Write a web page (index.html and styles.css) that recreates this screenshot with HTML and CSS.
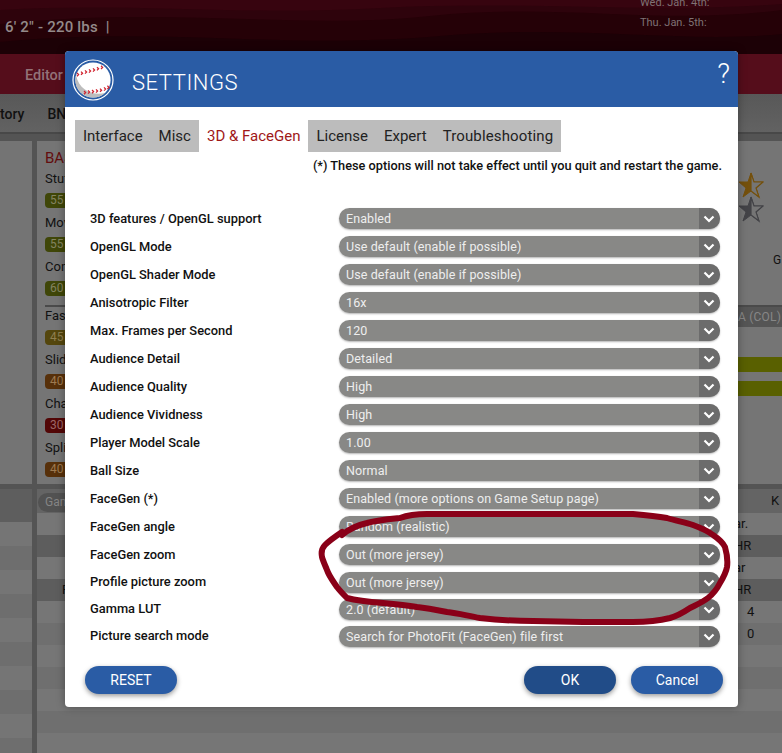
FILE: index.html
```html
<!DOCTYPE html>
<html lang="en">
<head>
<meta charset="utf-8">
<title>Settings</title>
<link rel="stylesheet" href="styles.css">
</head>
<body>
<div class="page">
  <header class="topbar">
    <svg class="waves" width="782" height="54" viewBox="0 0 782 54" aria-hidden="true">
      <path d="M0 0H782V10C660 26 560 2 430 16C300 30 170 6 0 24Z" fill="#2e030c"/>
      <path d="M0 0H782V4C640 14 520 0 380 8C240 16 130 2 0 10Z" fill="#37040f"/>
      <path d="M0 42C160 26 280 50 440 36C580 24 680 44 782 34V54H0Z" fill="#1c0106"/>
    </svg>
    <div class="bio">6' 2" - 220 lbs &nbsp;|</div>
    <div class="dates">
      <div>Wed. Jan. 4th:</div>
      <div>Thu. Jan. 5th:</div>
    </div>
  </header>
  <nav class="mainnav"><span>Editor</span></nav>
  <nav class="subnav"><span>tory</span><span>BNN</span></nav>
  <main class="content">
    <section class="upper">
      <div class="col-left"></div>
      <div class="col-right">
        <h2 class="ratings-title">BASE</h2>
        <div class="rating"><span>Stuff</span><b class="pill olive">55</b></div>
        <div class="rating"><span>Move</span><b class="pill olive">55</b></div>
        <div class="rating"><span>Con</span><b class="pill olive">60</b></div>
        <div class="rating sep"><span>Fast</span><b class="pill mustard">45</b></div>
        <div class="rating"><span>Slid</span><b class="pill brown">40</b></div>
        <div class="rating"><span>Chan</span><b class="pill red">30</b></div>
        <div class="rating"><span>Spli</span><b class="pill brown">40</b></div>
        <div class="side">
          <div class="stars">
            <svg width="26" height="52" viewBox="0 0 26 52" aria-hidden="true">
              <path d="M13 2L16 11H25L18 17L21 26L13 20L5 26L8 17L1 11H10Z" fill="#74500c" stroke="#74500c"/>
              <path d="M13 2L16 11H25L18 17L21 26L13 20Z" fill="#757575" stroke="#74500c" stroke-width="1.2"/>
              <path d="M13 26L16 35H25L18 41L21 50L13 44L5 50L8 41L1 35H10Z" fill="#434347" stroke="#434347"/>
              <path d="M13 26L16 35H25L18 41L21 50L13 44Z" fill="#757575" stroke="#434347" stroke-width="1.2"/>
            </svg>
          </div>
          <div class="g">G</div>
          <div class="col-bar">A (COL)</div>
          <div class="lime"></div>
          <div class="lime"></div>
        </div>
      </div>
    </section>
    <section class="lower">
      <div class="lower-left">
        <div class="t h"></div><div class="t"></div><div class="t a"></div><div class="t"></div><div class="t a"></div><div class="t"></div><div class="t a"></div><div class="t"></div><div class="t a"></div><div class="t"></div><div class="t a"></div>
      </div>
      <div class="lower-right">
        <div class="r top"><span class="game-pill">Game</span><span class="val">K</span></div>
        <div class="r"><span class="val">ar.</span></div>
        <div class="r dark"><span class="val">HR</span></div>
        <div class="r"><span class="val">ar</span></div>
        <div class="r dark"><span class="p">P</span><span class="val">HR</span></div>
        <div class="r"><span class="val num">4</span></div>
        <div class="r alt"><span class="val num">0</span></div>
        <div class="r"></div>
        <div class="r alt"></div>
        <div class="r"></div>
        <div class="r alt"></div>
        <div class="r"></div>
      </div>
    </section>
  </main>

  <div class="modal">
    <div class="modal-head">
      <svg class="ball" width="42" height="42" viewBox="0 0 42 42" aria-hidden="true">
        <circle cx="21" cy="21" r="20" fill="#2a5ca5" stroke="#fff" stroke-width="1.2"/>
        <circle cx="21" cy="21" r="17.6" fill="#fff"/>
        <path d="M4 16A17.6 17.6 0 0 0 21 38.6A17.6 17.6 0 0 0 33 34C22 37 7 32 4 16Z" fill="#bdbdbd"/>
        <g fill="none" stroke="#d0202c" stroke-width="1.25">
          <path d="M5 14l1.6 1.6-1.6 1.6M9 12.6l1.6 1.6-1.6 1.6M13 11.4l1.6 1.6-1.6 1.6M17 10.4l1.6 1.6-1.6 1.6M21 9.4l1.6 1.6-1.6 1.6M25 8.2l1.6 1.6-1.6 1.6M29 6.8l1.6 1.6-1.6 1.6"/>
          <path d="M12 32l1.6 1.6-1.6 1.6M16 31.4l1.6 1.6-1.6 1.6M20 31l1.6 1.6-1.6 1.6M24 30.4l1.6 1.6-1.6 1.6M28 29.6l1.6 1.6-1.6 1.6M32 28.4l1.6 1.6-1.6 1.6M35.4 26.8l1.6 1.6-1.6 1.6"/>
        </g>
      </svg>
      <h1 class="modal-title">SETTINGS</h1>
      <span class="help">?</span>
    </div>
    <div class="modal-body">
      <div class="tabs">
        <span class="tab">Interface</span>
        <span class="tab">Misc</span>
        <span class="tab active">3D &amp; FaceGen</span>
        <span class="tab">License</span>
        <span class="tab">Expert</span>
        <span class="tab last">Troubleshooting</span>
      </div>
      <p class="note">(*) These options will not take effect until you quit and restart the game.</p>
      <div class="options">
        <div class="opt"><label>3D features / OpenGL support</label><div class="select"><span>Enabled</span><i><svg width="12" height="8" viewBox="0 0 12 8"><path d="M1.5 1.5L6 6L10.5 1.5" fill="none" stroke="#fff" stroke-width="2.2"/></svg></i></div></div>
        <div class="opt"><label>OpenGL Mode</label><div class="select"><span>Use default (enable if possible)</span><i><svg width="12" height="8" viewBox="0 0 12 8"><path d="M1.5 1.5L6 6L10.5 1.5" fill="none" stroke="#fff" stroke-width="2.2"/></svg></i></div></div>
        <div class="opt"><label>OpenGL Shader Mode</label><div class="select"><span>Use default (enable if possible)</span><i><svg width="12" height="8" viewBox="0 0 12 8"><path d="M1.5 1.5L6 6L10.5 1.5" fill="none" stroke="#fff" stroke-width="2.2"/></svg></i></div></div>
        <div class="opt"><label>Anisotropic Filter</label><div class="select"><span>16x</span><i><svg width="12" height="8" viewBox="0 0 12 8"><path d="M1.5 1.5L6 6L10.5 1.5" fill="none" stroke="#fff" stroke-width="2.2"/></svg></i></div></div>
        <div class="opt"><label>Max. Frames per Second</label><div class="select"><span>120</span><i><svg width="12" height="8" viewBox="0 0 12 8"><path d="M1.5 1.5L6 6L10.5 1.5" fill="none" stroke="#fff" stroke-width="2.2"/></svg></i></div></div>
        <div class="opt"><label>Audience Detail</label><div class="select"><span>Detailed</span><i><svg width="12" height="8" viewBox="0 0 12 8"><path d="M1.5 1.5L6 6L10.5 1.5" fill="none" stroke="#fff" stroke-width="2.2"/></svg></i></div></div>
        <div class="opt"><label>Audience Quality</label><div class="select"><span>High</span><i><svg width="12" height="8" viewBox="0 0 12 8"><path d="M1.5 1.5L6 6L10.5 1.5" fill="none" stroke="#fff" stroke-width="2.2"/></svg></i></div></div>
        <div class="opt"><label>Audience Vividness</label><div class="select"><span>High</span><i><svg width="12" height="8" viewBox="0 0 12 8"><path d="M1.5 1.5L6 6L10.5 1.5" fill="none" stroke="#fff" stroke-width="2.2"/></svg></i></div></div>
        <div class="opt"><label>Player Model Scale</label><div class="select"><span>1.00</span><i><svg width="12" height="8" viewBox="0 0 12 8"><path d="M1.5 1.5L6 6L10.5 1.5" fill="none" stroke="#fff" stroke-width="2.2"/></svg></i></div></div>
        <div class="opt"><label>Ball Size</label><div class="select"><span>Normal</span><i><svg width="12" height="8" viewBox="0 0 12 8"><path d="M1.5 1.5L6 6L10.5 1.5" fill="none" stroke="#fff" stroke-width="2.2"/></svg></i></div></div>
        <div class="opt"><label>FaceGen (*)</label><div class="select"><span>Enabled (more options on Game Setup page)</span><i><svg width="12" height="8" viewBox="0 0 12 8"><path d="M1.5 1.5L6 6L10.5 1.5" fill="none" stroke="#fff" stroke-width="2.2"/></svg></i></div></div>
        <div class="opt"><label>FaceGen angle</label><div class="select"><span>Random (realistic)</span><i><svg width="12" height="8" viewBox="0 0 12 8"><path d="M1.5 1.5L6 6L10.5 1.5" fill="none" stroke="#fff" stroke-width="2.2"/></svg></i></div></div>
        <div class="opt"><label>FaceGen zoom</label><div class="select"><span>Out (more jersey)</span><i><svg width="12" height="8" viewBox="0 0 12 8"><path d="M1.5 1.5L6 6L10.5 1.5" fill="none" stroke="#fff" stroke-width="2.2"/></svg></i></div></div>
        <div class="opt tight"><label>Profile picture zoom</label><div class="select"><span>Out (more jersey)</span><i><svg width="12" height="8" viewBox="0 0 12 8"><path d="M1.5 1.5L6 6L10.5 1.5" fill="none" stroke="#fff" stroke-width="2.2"/></svg></i></div></div>
        <div class="opt tight"><label>Gamma LUT</label><div class="select"><span>2.0 (default)</span><i><svg width="12" height="8" viewBox="0 0 12 8"><path d="M1.5 1.5L6 6L10.5 1.5" fill="none" stroke="#fff" stroke-width="2.2"/></svg></i></div></div>
        <div class="opt tight"><label>Picture search mode</label><div class="select"><span>Search for PhotoFit (FaceGen) file first</span><i><svg width="12" height="8" viewBox="0 0 12 8"><path d="M1.5 1.5L6 6L10.5 1.5" fill="none" stroke="#fff" stroke-width="2.2"/></svg></i></div></div>
      </div>
      <div class="actions">
        <button class="btn" type="button">RESET</button>
        <span class="spacer"></span>
        <button class="btn pressed" type="button">OK</button>
        <button class="btn" type="button">Cancel</button>
      </div>
    </div>
  </div>

  <svg class="scribble" width="782" height="753" viewBox="0 0 782 753" aria-hidden="true">
    <path d="M342 535C350 528 358 525 367 523C378 520 390 519 400 518C408 515 418 514 427 514L500 514L633 514C645 515 656 516 667 518C676 521 685 522 693 525C701 528 708 531 713 535C719 539 723 543 725 547C727 554 728 560 727 567C726 573 723 578 720 583C717 589 713 594 708 598C703 602 696 605 690 608C684 612 677 616 670 618C658 621 646 622 633 622L583 622L533 621C515 621 497 620 480 618C468 616 458 613 447 612C437 610 427 608 417 607C405 605 394 604 383 603C370 602 358 601 347 598C343 594 340 591 337 587C333 581 329 576 327 570C325 565 323 561 322 557C321 552 322 548 325 545C330 540 336 536 342 532" fill="none" stroke="#8a0018" stroke-width="6" stroke-linecap="round" stroke-linejoin="round"/>
  </svg>
</div>
</body>
</html>
```

FILE: styles.css
```css
* { box-sizing: border-box; }
html, body { margin: 0; padding: 0; background: #707070; }
body { font-family: Roboto, "Liberation Sans", sans-serif; }

.page {
  position: relative;
  width: 782px;
  height: 753px;
  overflow: hidden;
  display: flex;
  flex-direction: column;
  background: #707070;
}

/* Dimmed application behind the dialog */
.topbar {
  position: relative;
  flex: 0 0 54px;
  background: #250107;
  display: flex;
  justify-content: space-between;
  overflow: hidden;
}
.waves { position: absolute; left: 0; top: 0; }
.bio {
  position: relative;
  padding: 18px 0 0 5px;
  font-size: 15px;
  line-height: 18px;
  font-weight: 500;
  color: #948a8a;
  letter-spacing: .2px;
}
.dates {
  position: relative;
  width: 142px;
  margin-top: -7px;
  font-size: 11px;
  line-height: 20px;
  color: #7f7274;
}
.mainnav {
  flex: 0 0 40px;
  background: #550d1b;
  padding: 13px 0 0 25px;
  font-size: 14.5px;
  line-height: 17px;
  font-weight: 500;
  color: #937278;
}
.subnav {
  flex: 0 0 40px;
  background: linear-gradient(#585858, #626262);
  display: flex;
  gap: 23px;
  padding-top: 11px;
  font-size: 14px;
  line-height: 18px;
  font-weight: 500;
  color: #111;
  border-bottom: 2px solid #484848;
}
.content {
  flex: 1;
  min-height: 0;
  display: flex;
  flex-direction: column;
  padding-top: 7px;
  background: #545454;
}
.upper { flex: 0 0 346px; display: flex; gap: 5px; border-bottom: 5px solid #545454; }
.col-left { width: 32px; background: #747474; }
.col-right { position: relative; flex: 1; background: #757575; padding: 8px 0 0 8px; }
.ratings-title { margin: 0 0 4px; font-size: 15px; line-height: 18px; font-weight: 400; color: #630e0e; }
.rating { height: 44px; font-size: 13px; color: #111; }
.rating span { display: block; line-height: 16px; height: 22px; }
.sep { margin-top: 2px; border-top: 2px solid #4a4a4a; height: 47px; padding-top: 1px; }
.pill {
  display: block;
  width: 34px;
  height: 15px;
  border-radius: 4px;
  font-size: 12px;
  line-height: 15px;
  font-weight: 400;
  padding-left: 5px;
  color: #848460;
}
.olive { background: #3f4608; }
.mustard { background: #54460d; color: #8f7f50; }
.brown { background: #57300a; color: #9d7a50; }
.red { background: #520606; color: #9d6666; }

.side { position: absolute; left: 701px; top: 0; width: 44px; display: flex; flex-direction: column; }
.stars { padding-top: 30px; height: 75px; }
.g { padding-left: 35px; font-size: 12px; line-height: 14px; color: #111; margin-top: 37px; }
.col-bar {
  margin-top: 40px;
  height: 20px;
  background: #555;
  font-size: 12px;
  line-height: 20px;
  color: #878787;
  letter-spacing: .2px;
  white-space: nowrap;
}
.lime { height: 15px; margin-top: 9px; background: #596000; }
.col-bar + .lime { margin-top: 30px; }

.lower { flex: 1; min-height: 0; display: flex; gap: 5px; }
.lower-left { width: 32px; }
.t { height: 24px; background: #757575; }
.t.a { background: #6e6e6e; }
.t.h { height: 33px; background: #5e5e5e; }
.lower-right { flex: 1; }
.r {
  position: relative;
  height: 22px;
  background: #767676;
  font-size: 13px;
  line-height: 21px;
  color: #111;
}
.r.alt { background: #6f6f6f; }
.r.dark { background: #5d5d5d; }
.r.top { height: 24px; background: #646464; }
.val { position: absolute; top: 0; left: 697px; white-space: nowrap; }
.num { left: 710px; }
.r.top .val { left: 734px; line-height: 24px; }
.game-pill {
  display: block;
  width: 70px;
  height: 19px;
  margin-left: 1px;
  position: relative;
  top: 4px;
  border-radius: 10px;
  background: #525252;
  padding-left: 7px;
  font-size: 12px;
  line-height: 19px;
  color: #858585;
}
.p { position: absolute; left: 25px; }

/* Dialog */
.modal {
  position: absolute;
  left: 65px;
  top: 51px;
  width: 673px;
  height: 656px;
  border-radius: 4px;
  background: #fff;
  box-shadow: 0 0 8px rgba(0,0,0,.35);
  overflow: hidden;
}
.modal-head {
  position: relative;
  height: 56px;
  background: #2a5ca5;
  display: flex;
  align-items: center;
  padding: 2px 0 0 7px;
  color: #fff;
}
.ball { flex: none; }
.modal-title {
  margin: 0 0 0 18px;
  font-size: 22px;
  line-height: 26px;
  font-weight: 300;
  letter-spacing: .55px;
  position: relative;
  top: 3px;
}
.help {
  position: absolute;
  right: 8px;
  top: 7px;
  font-size: 28px;
  line-height: 32px;
  font-weight: 300;
}
.modal-body { padding: 13px 15px 0 10px; }
.tabs {
  display: inline-flex;
  height: 32px;
  background: #bcbcbc;
  font-size: 15px;
  line-height: 32px;
  color: #222;
}
.tab { padding: 0 8px; white-space: nowrap; }
.tab.last { letter-spacing: .13px; }
.tab.active { background: #fff; color: #a01818; }
.note {
  margin: 6px 1px 0 0;
  text-align: right;
  font-size: 12.75px;
  line-height: 16px;
  font-weight: 500;
  color: #111;
}
.options { margin-top: 34px; padding: 0 3px 0 15px; }
.opt {
  display: flex;
  align-items: flex-start;
  height: 28px;
  font-size: 12.875px;
  font-weight: 500;
  color: #111;
}
.opt.tight { height: 27px; }
.opt label { width: 249px; line-height: 21px; flex: none; }
.opt.tight label { line-height: 19px; }
.select {
  flex: 1;
  height: 21px;
  display: flex;
  justify-content: space-between;
  border-radius: 10.5px;
  overflow: hidden;
  background: #888886;
  box-shadow: 0 1px 2px rgba(0,0,0,.3);
  font-size: 12.5px;
  font-weight: 400;
  line-height: 21px;
  color: #eee;
}
.select span { padding-left: 7px; letter-spacing: .1px; }
.select i {
  flex: 0 0 21px;
  display: flex;
  align-items: center;
  justify-content: center;
  background: #6c6c6c;
  padding-right: 1px;
}
.actions { display: flex; gap: 15px; margin-top: 13px; padding-left: 10px; }
.spacer { flex: 1; }
.btn {
  width: 92px;
  height: 28px;
  border: 0;
  border-radius: 14px;
  background: #2a5ca5;
  color: #fff;
  font-family: inherit;
  font-size: 14px;
  line-height: 28px;
  padding: 0;
  box-shadow: 0 2px 5px rgba(0,0,0,.4);
}
.btn.pressed { background: #214c88; }

.scribble { position: absolute; left: 0; top: 0; pointer-events: none; }
```
